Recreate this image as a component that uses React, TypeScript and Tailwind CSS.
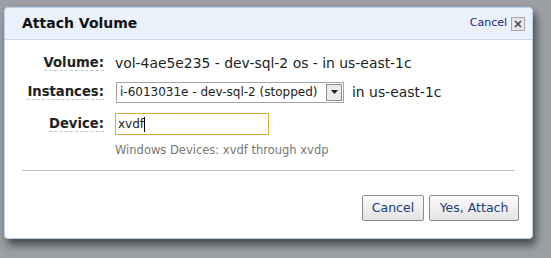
import React from "react";

export default function App() {
  const font = { fontFamily: '"DejaVu Sans", Verdana, sans-serif' };
  return (
    <div className="w-[551px] h-[258px] bg-[#9ca0a5] overflow-hidden pl-[4px] pt-[7px]" style={font}>
      <div className="w-[529px] h-[232px] bg-white rounded-[4px] border border-[#b9d3ec] shadow-[3px_6px_9px_rgba(0,0,0,0.55)] flex flex-col overflow-hidden">
        <div className="h-[32px] bg-[#eaf1fb] border-b border-[#c7dbf1] flex items-center justify-between pl-[17px] pr-[7px]">
          <span className="text-[14px] font-bold text-[#111]">Attach Volume</span>
          <div className="flex items-center gap-[4px]">
            <span className="text-[11px] text-[#1a2a7a]">Cancel</span>
            <span className="w-[14px] h-[14px] border border-[#a8a8a8] bg-[#e8e8e8] flex items-center justify-center">
              <svg width="8" height="8" viewBox="0 0 8 8"><path d="M1 1L7 7M7 1L1 7" stroke="#444" strokeWidth="1.6" /></svg>
            </span>
          </div>
        </div>
        <div className="flex flex-col text-[13.9px] text-[#222]">
          <div className="flex items-center h-[24px] mt-[11px]">
            <div className="w-[99px] text-right text-[13.2px]"><span className="font-bold border-b border-dashed border-[#c4c4c4]">Volume:</span></div>
            <span className="ml-[11px]">vol-4ae5e235 - dev-sql-2 os - in us-east-1c</span>
          </div>
          <div className="flex items-center h-[24px] mt-[5px]">
            <div className="w-[99px] text-right text-[13.2px]"><span className="font-bold border-b border-dashed border-[#c4c4c4]">Instances:</span></div>
            <div className="ml-[12px] w-[228px] h-[21px] border border-[#a5a5a5] flex items-center justify-between pl-[3px] pr-[1px] text-[12px]">
              <span>i-6013031e - dev-sql-2 (stopped)</span>
              <span className="w-[16px] h-[17px] border border-[#8f8f8f] bg-[#eaeaea] flex items-center justify-center">
                <svg width="7" height="4" viewBox="0 0 7 4"><path d="M0 0H7L3.5 4Z" fill="#222" /></svg>
              </span>
            </div>
            <span className="ml-[8px]">in us-east-1c</span>
          </div>
          <div className="flex items-center h-[24px] mt-[8px]">
            <div className="w-[99px] text-right text-[13.2px]"><span className="font-bold border-b border-dashed border-[#c4c4c4]">Device:</span></div>
            <div className="ml-[11px] w-[154px] h-[22px] border border-[#e0a63c] flex items-center pl-[2px] text-[12px]">
              xvdf<span className="w-px h-[15px] bg-black" />
            </div>
          </div>
          <div className="ml-[110px] mt-[6px] text-[11.5px] text-[#777]">Windows Devices: xvdf through xvdp</div>
          <div className="mx-[17px] mt-[11px] h-px bg-[#bdbdbd]" />
          <div className="flex justify-end gap-[5px] pr-[13px] mt-[24px]">
            <button className="w-[62px] h-[26px] border border-[#8c8c8c] rounded-[2px] bg-gradient-to-b from-[#fbfbfb] to-[#e4e4e4] text-[12.5px] text-[#1d3e7a]">Cancel</button>
            <button className="w-[90px] h-[26px] border border-[#8c8c8c] rounded-[2px] bg-gradient-to-b from-[#fbfbfb] to-[#e4e4e4] text-[12.5px] text-[#1d3e7a]">Yes, Attach</button>
          </div>
        </div>
      </div>
    </div>
  );
}
